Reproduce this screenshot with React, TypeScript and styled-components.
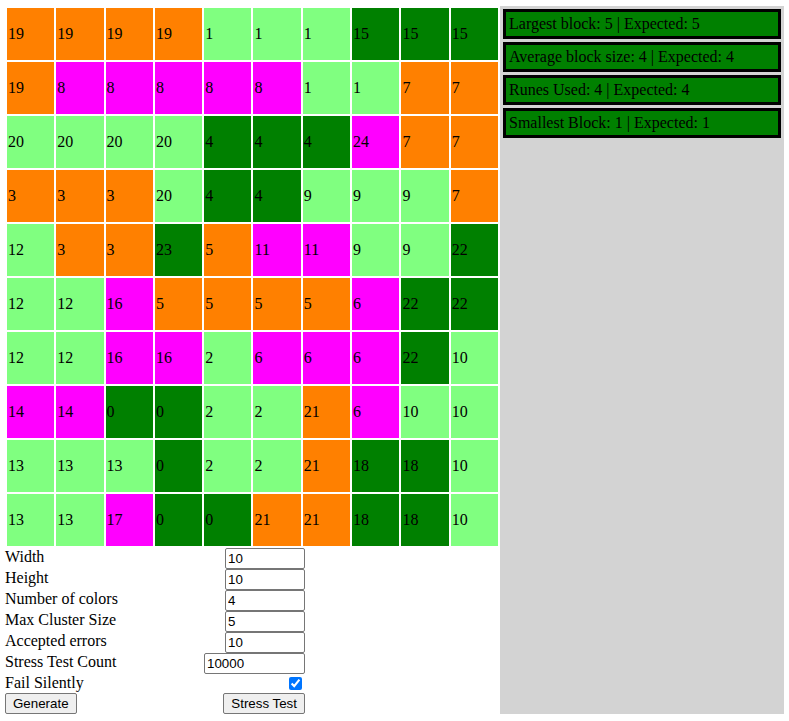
import styled, { createGlobalStyle } from 'styled-components';

type Tone = 'O' | 'L' | 'M' | 'D';

const tones: Record<Tone, string> = {
  O: '#ff8000',
  L: '#80ff80',
  M: '#ff00ff',
  D: '#008000',
};

// each cell written as value + tone letter
const rows = [
  '19O 19O 19O 19O 1L 1L 1L 15D 15D 15D',
  '19O 8M 8M 8M 8M 8M 1L 1L 7O 7O',
  '20L 20L 20L 20L 4D 4D 4D 24M 7O 7O',
  '3O 3O 3O 20L 4D 4D 9L 9L 9L 7O',
  '12L 3O 3O 23D 5O 11M 11M 9L 9L 22D',
  '12L 12L 16M 5O 5O 5O 5O 6M 22D 22D',
  '12L 12L 16M 16M 2L 6M 6M 6M 22D 10L',
  '14M 14M 0D 0D 2L 2L 21O 6M 10L 10L',
  '13L 13L 13L 0D 2L 2L 21O 18D 18D 10L',
  '13L 13L 17M 0D 0D 21O 21O 18D 18D 10L',
];

const cells = rows.flatMap((r) =>
  r.split(' ').map((c) => ({ value: c.slice(0, -1), tone: c.slice(-1) as Tone }))
);

const stats = [
  'Largest block: 5 | Expected: 5',
  'Average block size: 4 | Expected: 4',
  'Runes Used: 4 | Expected: 4',
  'Smallest Block: 1 | Expected: 1',
];

const fields = [
  { label: 'Width', value: '10', wide: false },
  { label: 'Height', value: '10', wide: false },
  { label: 'Number of colors', value: '4', wide: false },
  { label: 'Max Cluster Size', value: '5', wide: false },
  { label: 'Accepted errors', value: '10', wide: false },
  { label: 'Stress Test Count', value: '10000', wide: true },
];

const GlobalStyle = createGlobalStyle`
  body {
    margin: 0;
    background: #fff;
    font-family: "Liberation Serif", "Times New Roman", serif;
    font-size: 16px;
    color: #000;
  }
`;

const App = () => {
  return (
    <>
      <GlobalStyle />
      <Page>
        <Main>
          <Board>
            {cells.map((c, i) => (
              <Cell key={i} $tone={c.tone}>
                {c.value}
              </Cell>
            ))}
          </Board>
          <Form>
            {fields.map((f) => (
              <FieldRow key={f.label}>
                <Label>{f.label}</Label>
                <NumberInput type='text' defaultValue={f.value} $wide={f.wide} />
              </FieldRow>
            ))}
            <FieldRow>
              <Label>Fail Silently</Label>
              <Check type='checkbox' defaultChecked />
            </FieldRow>
            <FieldRow>
              <Button>Generate</Button>
              <Button>Stress Test</Button>
            </FieldRow>
          </Form>
        </Main>
        <Side>
          {stats.map((s) => (
            <Stat key={s}>{s}</Stat>
          ))}
        </Side>
      </Page>
    </>
  );
};

const Page = styled.div`
  display: flex;
  align-items: stretch;
  padding: 6px 5px 0 5px;
`;

const Main = styled.div`
  width: 495px;
  display: flex;
  flex-direction: column;
`;

const Board = styled.div`
  display: grid;
  grid-template-columns: repeat(10, 1fr);
  grid-auto-rows: 52px;
  gap: 2px;
  margin: 2px 2px 0 2px;
`;

const Cell = styled.div<{ $tone: Tone }>`
  display: flex;
  align-items: center;
  padding-left: 1px;
  background: ${({ $tone }) => tones[$tone]};
  line-height: 1;
`;

const Form = styled.div`
  width: 300px;
  display: flex;
  flex-direction: column;
  margin-top: 2px;
`;

const FieldRow = styled.div`
  display: flex;
  justify-content: space-between;
  align-items: flex-start;
`;

const Label = styled.div`
  line-height: 18px;
`;

const NumberInput = styled.input<{ $wide: boolean }>`
  box-sizing: border-box;
  width: ${({ $wide }) => ($wide ? '101px' : '80px')};
  height: 21px;
  margin: 0;
  padding: 1px 2px;
  font-family: "Liberation Sans", Arial, sans-serif;
  font-size: 13.333px;
  border: 1px solid #767676;
  border-radius: 2px;
`;

const Check = styled.input`
  width: 13px;
  height: 13px;
  margin: 3px 3px 3px 4px;
`;

const Button = styled.button`
  box-sizing: border-box;
  height: 21px;
  margin: 0;
  padding: 1px 7px;
  font-family: "Liberation Sans", Arial, sans-serif;
  font-size: 13.333px;
  background: #efefef;
  border: 1px solid #767676;
  border-radius: 2px;
  color: #000;
`;

const Side = styled.div`
  width: 284px;
  height: 708px;
  box-sizing: border-box;
  background: #d3d3d3;
  padding: 3px;
  display: flex;
  flex-direction: column;
  gap: 3px;
`;

const Stat = styled.div`
  background: #008000;
  border: 3px solid #000;
  padding: 3px;
  line-height: 18px;
  height: 18px;
`;

export default App;
